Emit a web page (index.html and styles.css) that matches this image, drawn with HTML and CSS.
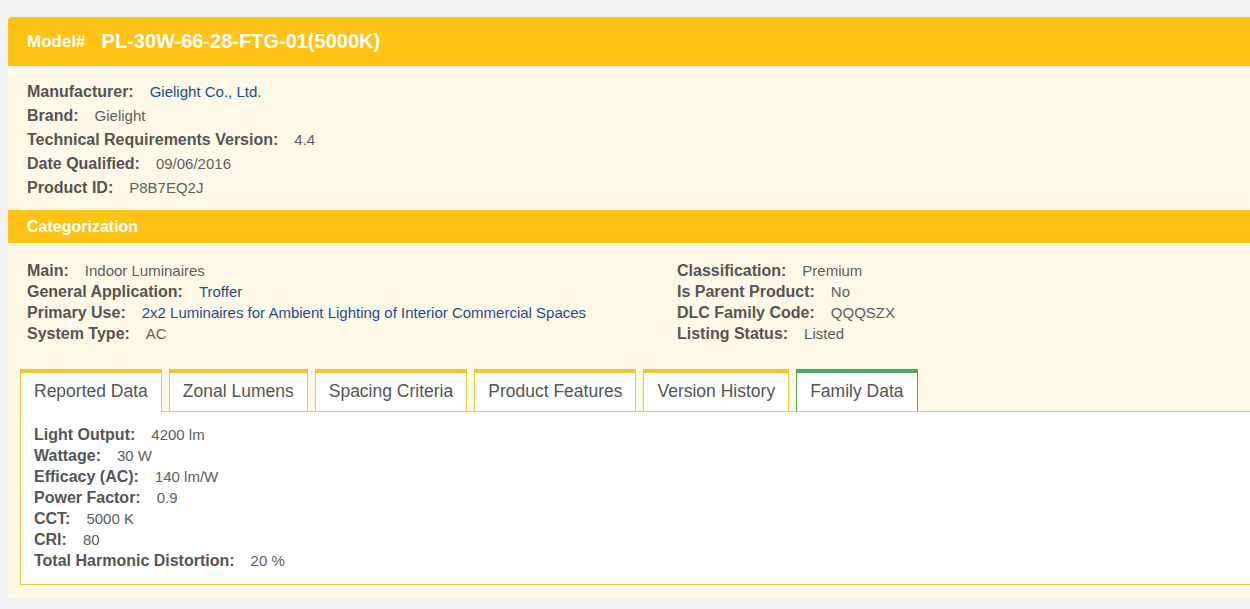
FILE: index.html
```html
<!DOCTYPE html>
<html lang="en">
<head>
  <meta charset="UTF-8" />
  <title>PL-30W-66-28-FTG-01(5000K)</title>
  <link rel="stylesheet" href="styles.css">
</head>
<body>
  <div class="card">
    <!-- Model header -->
    <div class="card-header">
      <span class="model-label">Model#</span>
      <span class="model-number">PL-30W-66-28-FTG-01(5000K)</span>
    </div>

    <!-- Basic info -->
    <div class="info-list">
      <div class="row"><span class="label">Manufacturer:</span> <a class="link">Gielight Co., Ltd.</a></div>
      <div class="row"><span class="label">Brand:</span> <span class="value">Gielight</span></div>
      <div class="row"><span class="label">Technical Requirements Version:</span> <span class="value">4.4</span></div>
      <div class="row"><span class="label">Date Qualified:</span> <span class="value">09/06/2016</span></div>
      <div class="row"><span class="label">Product ID:</span> <span class="value">P8B7EQ2J</span></div>
    </div>

    <!-- Categorization -->
    <div class="section-bar">Categorization</div>
    <div class="categories">
      <div class="col">
        <div class="row compact"><span class="label">Main:</span> <span class="value">Indoor Luminaires</span></div>
        <div class="row compact"><span class="label">General Application:</span> <a class="link">Troffer</a></div>
        <div class="row compact"><span class="label">Primary Use:</span> <a class="link">2x2 Luminaires for Ambient Lighting of Interior Commercial Spaces</a></div>
        <div class="row compact"><span class="label">System Type:</span> <span class="value">AC</span></div>
      </div>
      <div class="col">
        <div class="row compact"><span class="label">Classification:</span> <span class="value">Premium</span></div>
        <div class="row compact"><span class="label">Is Parent Product:</span> <span class="value">No</span></div>
        <div class="row compact"><span class="label">DLC Family Code:</span> <span class="value">QQQSZX</span></div>
        <div class="row compact"><span class="label">Listing Status:</span> <span class="value">Listed</span></div>
      </div>
    </div>

    <!-- Tabs -->
    <div class="tabs">
      <button class="tab active">Reported Data</button>
      <button class="tab">Zonal Lumens</button>
      <button class="tab">Spacing Criteria</button>
      <button class="tab">Product Features</button>
      <button class="tab">Version History</button>
      <button class="tab family">Family Data</button>
    </div>
    <div class="tab-panel">
      <div class="row compact"><span class="label">Light Output:</span> <span class="value">4200 lm</span></div>
      <div class="row compact"><span class="label">Wattage:</span> <span class="value">30 W</span></div>
      <div class="row compact"><span class="label">Efficacy (AC):</span> <span class="value">140 lm/W</span></div>
      <div class="row compact"><span class="label">Power Factor:</span> <span class="value">0.9</span></div>
      <div class="row compact"><span class="label">CCT:</span> <span class="value">5000 K</span></div>
      <div class="row compact"><span class="label">CRI:</span> <span class="value">80</span></div>
      <div class="row compact"><span class="label">Total Harmonic Distortion:</span> <span class="value">20 %</span></div>
    </div>
  </div>
</body>
</html>
```

FILE: styles.css
```css
/* Base */
body {
  font-family: "Liberation Sans", Arial, sans-serif;
  background-color: #f1f1f1;
  margin: 0;
  padding: 17px 0 0 8px;
  overflow: hidden;
  color: #555;
}
/* Card */
.card {
  width: 1300px;
  background: #fef9e7;
  border-radius: 4px 4px 0 0;
  padding-bottom: 13px;
}
.card-header {
  height: 49px;
  display: flex;
  align-items: center;
  padding: 0 19px;
  background: #fec314;
  border-radius: 4px 4px 0 0;
  color: #fff;
  font-weight: bold;
}
.model-label {
  font-size: 17px;
  margin-right: 16px;
}
.model-number {
  font-size: 20px;
}
/* Rows */
.info-list {
  padding: 14px 19px 10px;
}
.row {
  display: flex;
  align-items: baseline;
  height: 24px;
  line-height: 24px;
  font-size: 15px;
  white-space: nowrap;
}
.row.compact {
  height: 21px;
  line-height: 21px;
}
.label {
  font-size: 16px;
  font-weight: bold;
  color: #555;
  margin-right: 16px;
}
.value {
  color: #5e5e5e;
}
.link {
  color: #1b4f8a;
  cursor: pointer;
}
/* Categorization */
.section-bar {
  height: 33px;
  line-height: 33px;
  padding: 0 19px;
  background: #fec314;
  color: #fff;
  font-size: 16px;
  font-weight: bold;
}
.categories {
  display: grid;
  grid-template-columns: 650px 1fr;
  padding: 17px 19px 25px;
}
/* Tabs */
.tabs {
  display: flex;
  gap: 7px;
  margin-left: 12px;
}
.tab {
  font-family: inherit;
  font-size: 17.5px;
  color: #555;
  background: #fff;
  border: 1px solid #f3c63a;
  border-top: 4px solid #f7c32e;
  border-bottom: none;
  padding: 8px 13px 10px;
  line-height: 20px;
  cursor: pointer;
}
.tab.active {
  position: relative;
  margin-bottom: -1px;
  padding-bottom: 11px;
}
.tab.family {
  border-color: #4ba95b;
}
.tab-panel {
  margin-left: 12px;
  background: #fff;
  border: 1px solid #e9c648;
  padding: 12px 13px 13px;
}
```
